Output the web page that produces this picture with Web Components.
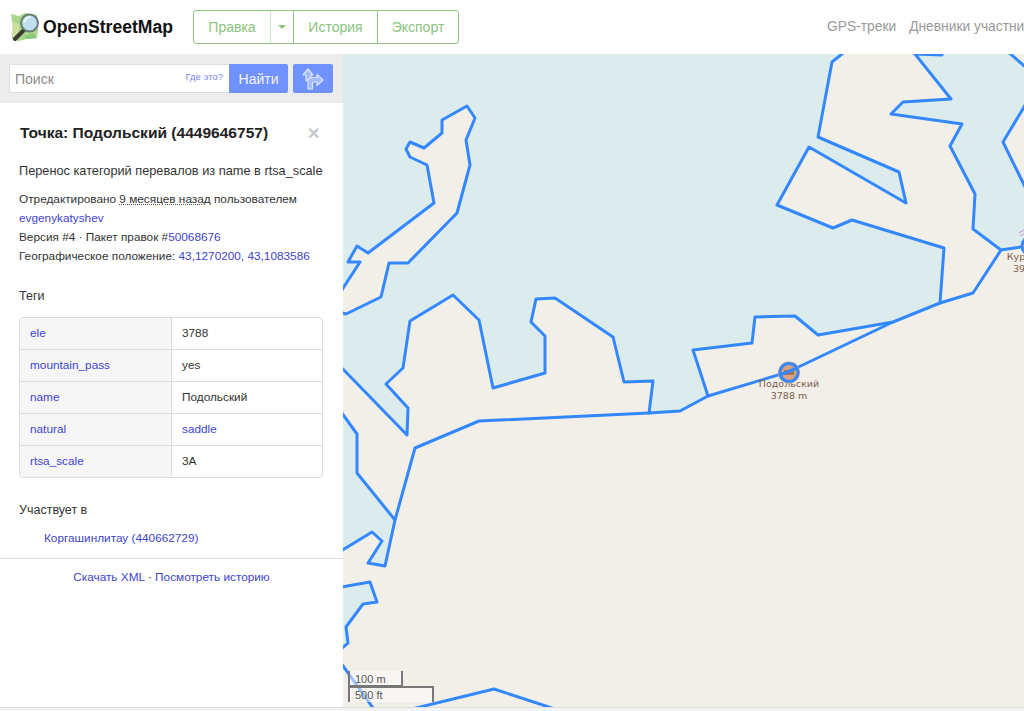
<!DOCTYPE html>
<html lang="ru">
<head>
<meta charset="utf-8">
<title>OpenStreetMap</title>
<style>
    html, body { margin: 0; height: 100%; overflow: hidden; }
    body { font-family: "Liberation Sans", Arial, sans-serif; color: #333; background: #fff; }
    osm-app { height: 711px; }
</style>
</head>
<body>
<osm-app>
    <osm-header slot="header"></osm-header>
    <osm-sidebar slot="sidebar">
        <osm-search></osm-search>
        <osm-details></osm-details>
    </osm-sidebar>
    <osm-map slot="map"></osm-map>
</osm-app>

<script>
window.customElements.define('osm-app', class extends HTMLElement {
    constructor() {
        super();
        this.attachShadow({ mode: 'open' });
        this.shadowRoot.innerHTML = `
            <style>
                :host { display: flex; flex-direction: column; width: 1024px; overflow: hidden; }
                .content { display: flex; height: 653px; }
                .footer { flex: 1; background: #f3f3f3; border-top: 1px solid #ddd; }
            </style>
            <slot name="header"></slot>
            <div class="content">
                <slot name="sidebar"></slot>
                <slot name="map"></slot>
            </div>
            <div class="footer"></div>
        `;
    }
});

window.customElements.define('osm-header', class extends HTMLElement {
    constructor() {
        super();
        this.attachShadow({ mode: 'open' });
        this.shadowRoot.innerHTML = `
            <style>
                :host { display: flex; align-items: center; height: 54px; background: #fff; white-space: nowrap; overflow: hidden; flex: none; }
                .brand { display: flex; flex: none; align-items: center; width: 173px; padding-left: 10px; padding-right: 10px; font-size: 17.6px; font-weight: bold; color: #111; }
                .brand svg { margin-right: 3px; flex: none; }
                .tabs { display: flex; flex: none; width: 266px; height: 34px; box-sizing: border-box; border: 1px solid #8fc583; border-radius: 3px; margin-top: -1px; color: #8cc37f; font-size: 14px; }
                .tabs div { display: flex; align-items: center; justify-content: center; box-sizing: border-box; border-right: 1px solid #8fc583; }
                .tabs div:last-child { border-right: 0; }
                .tabs .edit { width: 77px; border-right-color: #cfe4c9; }
                .tabs .more { width: 23px; }
                .tabs .more i { width: 0; height: 0; border: 4px solid transparent; border-top-color: #8cc37f; border-bottom: 0; }
                .tabs .hist { width: 84px; }
                .tabs .exp { flex: 1; }
                nav { display: flex; flex: none; gap: 13px; margin-left: 368px; margin-top: -1px; font-size: 13.8px; color: #999; }
            </style>
            <div class="brand">
                <svg width="30" height="30" viewBox="0 0 30 30">
                    <path d="M1 2 L9 4 L15 1 L27 3 L28 17 L27 26 L17 27 L9 29 L2 27 L3 15 Z" fill="#a9d68a"/>
                    <path d="M2 9 L10 13 L8 22 L3 25 Z" fill="#cde09f"/>
                    <path d="M13 25 L23 21 L27 26 L17 27 Z" fill="#8ac777"/>
                    <path d="M5 27 L14 18" stroke="#3b3b30" stroke-width="4" stroke-linecap="round"/>
                    <circle cx="19.5" cy="11" r="8.4" fill="#bfdfee" stroke="#6a7a74" stroke-width="2"/>
                    <path d="M14.5 10 A6 6 0 0 1 20.5 5" fill="none" stroke="#eef8fc" stroke-width="2"/>
                </svg>
                <span>OpenStreetMap</span>
            </div>
            <div class="tabs">
                <div class="edit">Правка</div>
                <div class="more"><i></i></div>
                <div class="hist">История</div>
                <div class="exp">Экспорт</div>
            </div>
            <nav><span>GPS-треки</span><span>Дневники участни</span></nav>
        `;
    }
});

window.customElements.define('osm-sidebar', class extends HTMLElement {
    constructor() {
        super();
        this.attachShadow({ mode: 'open' });
        this.shadowRoot.innerHTML = `
            <style>
                :host { display: block; width: 343px; flex: none; background: #fff; overflow: hidden; }
            </style>
            <slot></slot>
        `;
    }
});

window.customElements.define('osm-search', class extends HTMLElement {
    constructor() {
        super();
        this.attachShadow({ mode: 'open' });
        this.shadowRoot.innerHTML = `
            <style>
                :host { display: flex; height: 49px; box-sizing: border-box; padding: 10px 10px 10px 9px; background: #ececec; }
                .field { position: relative; display: flex; align-items: center; width: 220px; height: 29px; box-sizing: border-box; padding-left: 5px; background: #fff; border: 1px solid #ddd; border-right: 0; border-radius: 2px 0 0 2px; font-size: 14px; color: #8a8a8a; }
                .where { position: absolute; right: 6px; top: 6px; font-size: 9.5px; color: #7b85f0; }
                .go { display: flex; align-items: center; justify-content: center; width: 59px; height: 29px; background: #7092ff; border-radius: 0 2px 2px 0; color: #f2f5ff; font-size: 14px; }
                .route { display: flex; align-items: center; justify-content: center; width: 40px; height: 29px; margin-left: 5px; background: #7092ff; border-radius: 2px; }
            </style>
            <div class="field">Поиск<span class="where">Где это?</span></div>
            <div class="go">Найти</div>
            <div class="route">
                <svg width="24" height="24" viewBox="0 0 24 24">
                    <path d="M7 2 L12 8 L10 8 L10 10.5 L5 14 L5 8 L2 8 Z" fill="#a5b9ff" stroke="#dfe6ff" stroke-width="1.2" stroke-linejoin="round"/>
                    <path d="M22 13 L16 7.5 L16 10.5 L11 10.5 Q7 10.5 7 15 L7 22 L11.5 22 L11.5 16 Q11.5 15 13 15 L16 15 L16 18.5 Z" fill="#a5b9ff" stroke="#dfe6ff" stroke-width="1.2" stroke-linejoin="round"/>
                </svg>
            </div>
        `;
    }
});

window.customElements.define('osm-tags', class extends HTMLElement {
    constructor() {
        super();
        this.attachShadow({ mode: 'open' });
        this.shadowRoot.innerHTML = `
            <style>
                :host { display: block; margin: 12px 20px 0 19px; border: 1px solid #ddd; border-radius: 4px; overflow: hidden; }
            </style>
            <slot></slot>
        `;
    }
});

window.customElements.define('osm-tag', class extends HTMLElement {
    constructor() {
        super();
        this.attachShadow({ mode: 'open' });
        const value = this.getAttribute('value');
        const shown = this.hasAttribute('link') ? `<a>${value}</a>` : value;
        this.shadowRoot.innerHTML = `
            <style>
                :host { display: flex; height: 32px; box-sizing: border-box; border-bottom: 1px solid #ddd; font-size: 11.8px; color: #333; }
                :host(:last-child) { border-bottom: 0; height: 31px; }
                .k, .v { display: flex; align-items: center; padding: 0 0 1px 10px; box-sizing: border-box; }
                .k { width: 152px; background: #f6f6f6; border-right: 1px solid #ddd; }
                a { color: #3e44cc; }
            </style>
            <div class="k"><a>${this.getAttribute('key')}</a></div>
            <div class="v">${shown}</div>
        `;
    }
});

window.customElements.define('osm-details', class extends HTMLElement {
    constructor() {
        super();
        this.attachShadow({ mode: 'open' });
        this.shadowRoot.innerHTML = `
            <style>
                :host { display: block; font-size: 11.8px; color: #333; }
                a { color: #3e44cc; }
                .head { display: flex; justify-content: space-between; align-items: center; height: 20px; margin: 20px 23px 0 20px; }
                h2 { margin: 0; font-size: 15.55px; font-weight: bold; color: #222; white-space: nowrap; }
                .close { font-size: 16px; font-weight: bold; color: #c8c8c8; }
                .comment { margin: 19px 0 0 19px; font-size: 12.75px; line-height: 18px; white-space: nowrap; }
                .meta { margin: 10px 0 0 19px; line-height: 19px; }
                abbr { text-decoration: underline dotted #555; }
                h4 { margin: 0 0 0 19px; font-size: 12.5px; font-weight: normal; line-height: 18px; }
                .tags-title { margin-top: 21px; }
                .part-title { margin-top: 23px; }
                .part { margin: 10px 0 0 44px; line-height: 18px; }
                .actions { margin-top: 11px; border-top: 1px solid #ddd; padding-top: 9px; text-align: center; line-height: 18px; }
            </style>
            <div class="head">
                <h2>Точка: Подольский (4449646757)</h2>
                <span class="close">✕</span>
            </div>
            <div class="comment">Перенос категорий перевалов из name в rtsa_scale</div>
            <div class="meta">
                Отредактировано <abbr>9 месяцев назад</abbr> пользователем<br>
                <a>evgenykatyshev</a><br>
                Версия #4 · Пакет правок #<a>50068676</a><br>
                Географическое положение: <a>43,1270200, 43,1083586</a>
            </div>
            <h4 class="tags-title">Теги</h4>
            <osm-tags>
                <osm-tag key="ele" value="3788"></osm-tag>
                <osm-tag key="mountain_pass" value="yes"></osm-tag>
                <osm-tag key="name" value="Подольский"></osm-tag>
                <osm-tag key="natural" value="saddle" link></osm-tag>
                <osm-tag key="rtsa_scale" value="3А"></osm-tag>
            </osm-tags>
            <h4 class="part-title">Участвует в</h4>
            <div class="part"><a>Коргашинлитау (440662729)</a></div>
            <div class="actions"><a>Скачать XML</a> · <a>Посмотреть историю</a></div>
        `;
    }
});

window.customElements.define('osm-scale', class extends HTMLElement {
    constructor() {
        super();
        this.attachShadow({ mode: 'open' });
        this.shadowRoot.innerHTML = `
            <style>
                :host { position: absolute; left: 5px; bottom: 5px; font-size: 11px; color: #555; line-height: 12px; }
                div { box-sizing: border-box; padding: 2px 5px 1px; background: rgba(255, 255, 255, .5); border: 2px solid #777; white-space: nowrap; }
                .m { width: 55px; height: 16px; border-top: 0; }
                .ft { width: 86px; height: 16px; border-bottom: 0; margin-top: -1px; padding-top: 1px; }
            </style>
            <div class="m">100 m</div>
            <div class="ft">500 ft</div>
        `;
    }
});

window.customElements.define('osm-map', class extends HTMLElement {
    constructor() {
        super();
        this.attachShadow({ mode: 'open' });
        // the viewBox keeps page coordinates, so the outlines read straight off the screenshot
        const land = '336,362 407,435 408,408 386,384 403,368 410,321 453,295 479,320 493,388 545,373 545,336 531,322 536,299 555,298 613,337 624,382 653,381 649,413 680,411 708,396 693,350 752,343 755,317 795,316 818,335 893,322 940,303 944,248 852,220 833,228 777,205 809,147 906,203 899,172 818,137 832,62 847,50 915,50 915,54 951,99 903,102 891,114 962,124 950,146 975,194 973,229 1001,250 1021,247 1030,244 1030,714 336,714 336,654 348,643 346,627 363,604 377,602 370,582 336,588 336,554 372,532 382,541 368,563 385,566 395,520 357,473 357,434 336,405';
        const peninsula = '336,299 360,262 348,262 357,246 368,253 434,203 427,165 410,157 406,149 410,142 424,148 442,133 442,120 467,106 475,118 466,140 470,165 457,213 408,263 389,263 381,297 346,314 336,311';
        const patches = ['1006,50 1030,71 1030,50', '1030,97 1003,142 1030,197'];
        const ways = [
            '649,413 479,421 415,448 395,520',
            '708,396 788,372 893,322',
            '940,303 973,293 1001,250',
            '336,656 373,708',
            '412,709 494,689 555,709',
            '915,54 942,55'
        ];
        this.shadowRoot.innerHTML = `
            <style>
                :host { display: block; position: relative; flex: 1; height: 653px; background: #dcecec; overflow: hidden; }
                svg { display: block; }
                polygon { fill: #f2efe9; }
                polygon, polyline { stroke: #3388ff; stroke-width: 3; stroke-linejoin: round; stroke-linecap: round; }
                polyline { fill: none; }
                text { font-family: "DejaVu Sans", sans-serif; font-size: 9.5px; fill: #7d5f4b; text-anchor: middle; }
            </style>
            <svg width="681" height="653" viewBox="343 54 681 653">
                <polygon points="${land}"/>
                <polygon points="${peninsula}"/>
                ${patches.map(p => `<polygon points="${p}"/>`).join('')}
                ${ways.map(p => `<polyline points="${p}"/>`).join('')}

                <text x="789" y="387">Подольский</text>
                <text x="789" y="399">3788 m</text>
                <circle cx="789" cy="372.5" r="11" fill="#d9a183" stroke="none"/>
                <rect x="784" y="370" width="10" height="5" fill="#a8714f"/>
                <circle cx="789" cy="372.5" r="9" fill="none" stroke="#3388ff" stroke-width="3"/>
                <line x1="780" y1="375" x2="798" y2="367.7" stroke="#3388ff" stroke-width="3"/>

                <path d="M1019 233 L1024 230 M1020 236 L1024 234" stroke="#c988d8" stroke-width="1" fill="none"/>
                <circle cx="1031" cy="246" r="9" fill="#d9a183" stroke="#3388ff" stroke-width="3"/>
                <text x="1016" y="260">Кур</text>
                <text x="1019" y="272">39</text>
            </svg>
            <osm-scale></osm-scale>
        `;
    }
});
</script>
</body>
</html>
